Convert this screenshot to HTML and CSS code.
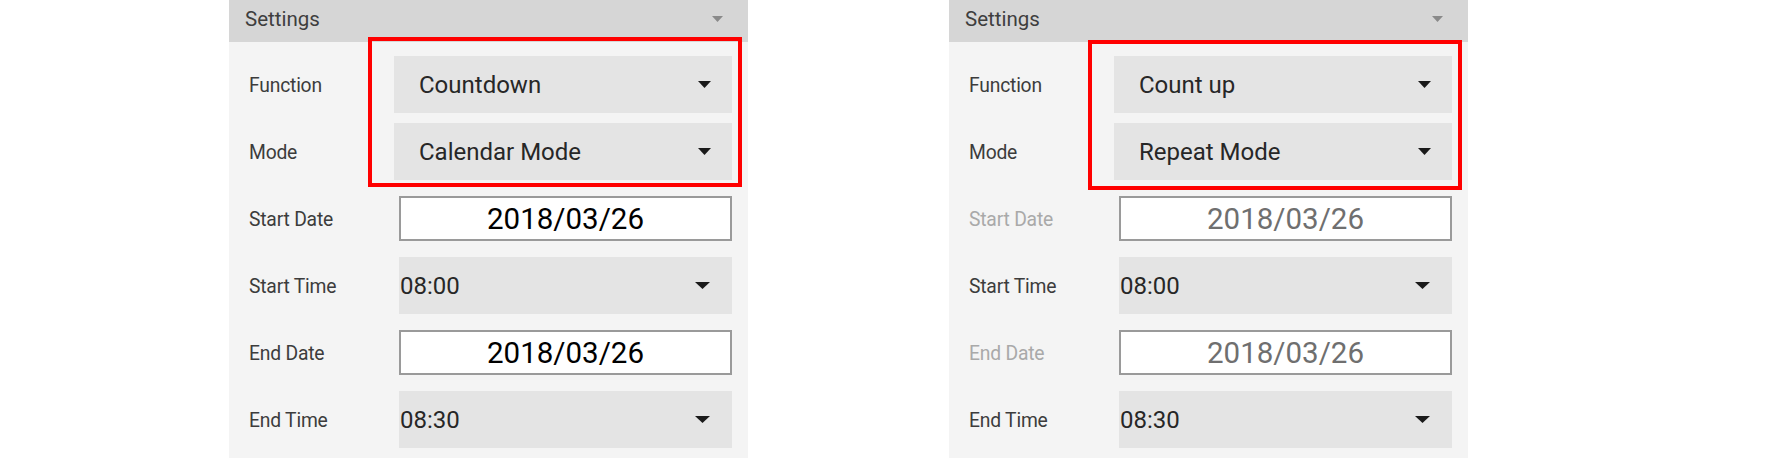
FILE: index.html
```html
<!DOCTYPE html>
<html lang="en">
<head>
<meta charset="utf-8">
<title>Settings</title>
<link rel="stylesheet" href="styles.css">
</head>
<body>
<div class="page">
  <section class="panel">
    <header class="panel-head">
      <span class="head-title">Settings</span>
      <svg class="head-caret" width="11" height="6" viewBox="0 0 11 6"><path d="M0 0H11L5.5 6Z"/></svg>
    </header>
    <div class="panel-body">
      <div class="row">
        <span class="label">Function</span>
        <div class="select wide"><span class="value">Countdown</span><svg class="caret" width="13" height="7" viewBox="0 0 13 7"><path d="M0 0H13L6.5 7Z"/></svg></div>
      </div>
      <div class="row">
        <span class="label">Mode</span>
        <div class="select wide"><span class="value">Calendar Mode</span><svg class="caret" width="13" height="7" viewBox="0 0 13 7"><path d="M0 0H13L6.5 7Z"/></svg></div>
      </div>
      <div class="row">
        <span class="label">Start Date</span>
        <div class="date"><span>2018/03/26</span></div>
      </div>
      <div class="row">
        <span class="label">Start Time</span>
        <div class="select time"><span class="value">08:00</span><svg class="caret" width="15" height="7" viewBox="0 0 15 7"><path d="M0 0H15L7.5 7Z"/></svg></div>
      </div>
      <div class="row">
        <span class="label">End Date</span>
        <div class="date"><span>2018/03/26</span></div>
      </div>
      <div class="row">
        <span class="label">End Time</span>
        <div class="select time"><span class="value">08:30</span><svg class="caret" width="15" height="7" viewBox="0 0 15 7"><path d="M0 0H15L7.5 7Z"/></svg></div>
      </div>
    </div>
    <div class="highlight"></div>
  </section>

  <section class="panel">
    <header class="panel-head">
      <span class="head-title">Settings</span>
      <svg class="head-caret" width="11" height="6" viewBox="0 0 11 6"><path d="M0 0H11L5.5 6Z"/></svg>
    </header>
    <div class="panel-body">
      <div class="row">
        <span class="label">Function</span>
        <div class="select wide"><span class="value">Count up</span><svg class="caret" width="13" height="7" viewBox="0 0 13 7"><path d="M0 0H13L6.5 7Z"/></svg></div>
      </div>
      <div class="row">
        <span class="label">Mode</span>
        <div class="select wide"><span class="value">Repeat Mode</span><svg class="caret" width="13" height="7" viewBox="0 0 13 7"><path d="M0 0H13L6.5 7Z"/></svg></div>
      </div>
      <div class="row">
        <span class="label disabled">Start Date</span>
        <div class="date disabled"><span>2018/03/26</span></div>
      </div>
      <div class="row">
        <span class="label">Start Time</span>
        <div class="select time"><span class="value">08:00</span><svg class="caret" width="15" height="7" viewBox="0 0 15 7"><path d="M0 0H15L7.5 7Z"/></svg></div>
      </div>
      <div class="row">
        <span class="label disabled">End Date</span>
        <div class="date disabled"><span>2018/03/26</span></div>
      </div>
      <div class="row">
        <span class="label">End Time</span>
        <div class="select time"><span class="value">08:30</span><svg class="caret" width="15" height="7" viewBox="0 0 15 7"><path d="M0 0H15L7.5 7Z"/></svg></div>
      </div>
    </div>
    <div class="highlight lower"></div>
  </section>
</div>
</body>
</html>
```

FILE: styles.css
```css
html, body {
  margin: 0;
  padding: 0;
  background: #ffffff;
  overflow: hidden;
}

body {
  font-family: Roboto, "Liberation Sans", sans-serif;
  width: 1772px;
  height: 458px;
}

.page {
  display: flex;
  gap: 201px;
  padding-left: 229px;
}

.panel {
  position: relative;
  width: 519px;
  background: #f4f4f4;
}

.panel-head {
  height: 42px;
  background: #d6d6d6;
  display: flex;
  align-items: center;
  justify-content: space-between;
  padding: 0 25px 0 16px;
}

.head-title {
  font-size: 20.5px;
  color: #3e3e3e;
  padding-bottom: 4px;
}

.head-caret {
  fill: #8a8a8a;
  margin-top: -4px;
}

.panel-body {
  padding: 9px 16px 12px 20px;
}

.row {
  height: 67px;
  display: flex;
  align-items: center;
}

.label {
  width: 145px;
  flex: none;
  font-size: 19.3px;
  color: #3c3c3c;
  letter-spacing: -0.2px;
  padding-top: 2px;
}

.label.disabled {
  color: #a9a9a9;
}

.select {
  flex: 1;
  height: 57px;
  background: #e4e4e4;
  display: flex;
  align-items: center;
  justify-content: space-between;
  box-sizing: border-box;
}

.select .value {
  font-size: 24px;
  color: #272727;
  padding-top: 1px;
}

.select .caret {
  fill: #1a1a1a;
}

.select.wide {
  padding: 0 21px 0 25px;
}

.select.time {
  margin-left: 5px;
  padding: 0 22px 0 1px;
}

.date {
  flex: 1;
  margin-left: 5px;
  height: 45px;
  box-sizing: border-box;
  background: #ffffff;
  border: 2px solid #9a9a9a;
  display: flex;
  align-items: center;
  justify-content: center;
  font-size: 29.5px;
  color: #000000;
}

.date.disabled {
  color: #6f6f6f;
}

.highlight {
  position: absolute;
  left: 139px;
  top: 37px;
  width: 374px;
  height: 150px;
  box-sizing: border-box;
  border: 4px solid #ff0000;
}

.highlight.lower {
  top: 40px;
}
```
